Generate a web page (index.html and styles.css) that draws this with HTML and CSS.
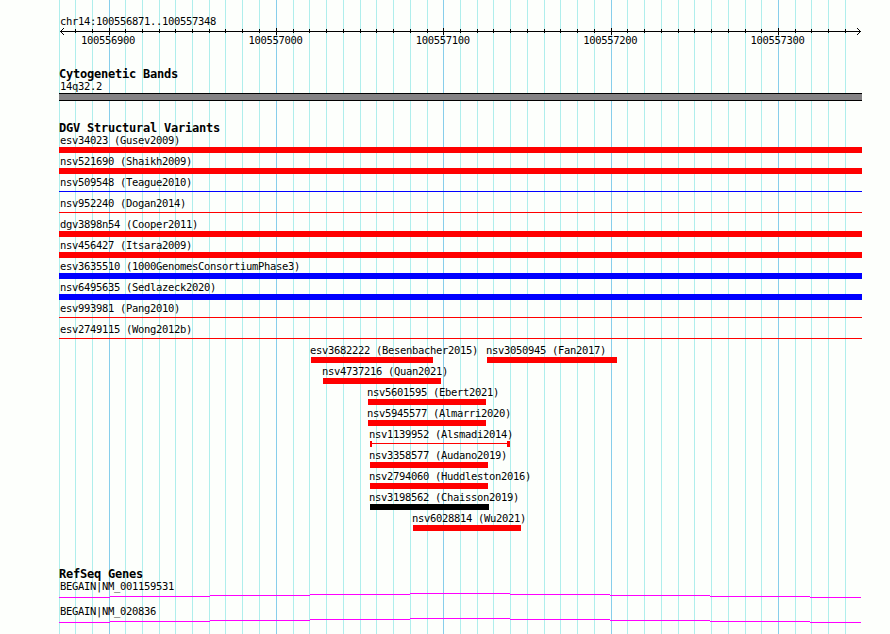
FILE: index.html
```
<!DOCTYPE html>
<html lang="en">
<head>
<meta charset="utf-8">
<title>chr14:100556871..100557348</title>
<link rel="stylesheet" href="styles.css">
</head>
<body>
<main class="browser">
<svg class="grid" width="890" height="634" shape-rendering="crispEdges" aria-hidden="true">
<path class="minor" d="M59.5 0V634M75.5 0V634M92.5 0V634M125.5 0V634M142.5 0V634M159.5 0V634M175.5 0V634M192.5 0V634M209.5 0V634M225.5 0V634M242.5 0V634M259.5 0V634M293.5 0V634M309.5 0V634M326.5 0V634M343.5 0V634M360.5 0V634M376.5 0V634M393.5 0V634M410.5 0V634M427.5 0V634M460.5 0V634M477.5 0V634M493.5 0V634M510.5 0V634M527.5 0V634M544.5 0V634M560.5 0V634M577.5 0V634M594.5 0V634M627.5 0V634M644.5 0V634M661.5 0V634M678.5 0V634M694.5 0V634M711.5 0V634M728.5 0V634M745.5 0V634M761.5 0V634M795.5 0V634M811.5 0V634M828.5 0V634M845.5 0V634"/>
<path class="major" d="M109.5 0V634M276.5 0V634M443.5 0V634M611.5 0V634M778.5 0V634"/>
</svg>
<header class="ruler">
<div class="label region">chr14:100556871..100557348</div>
<svg class="axis" width="890" height="7" shape-rendering="crispEdges">
<path d="M60 3.5H861M75.5 1v4M92.5 1v4M109.5 0v7M125.5 1v4M142.5 1v4M159.5 1v4M175.5 1v4M192.5 1v4M209.5 1v4M225.5 1v4M242.5 1v4M259.5 1v4M276.5 0v7M293.5 1v4M309.5 1v4M326.5 1v4M343.5 1v4M360.5 1v4M376.5 1v4M393.5 1v4M410.5 1v4M427.5 1v4M443.5 0v7M460.5 1v4M477.5 1v4M493.5 1v4M510.5 1v4M527.5 1v4M544.5 1v4M560.5 1v4M577.5 1v4M594.5 1v4M611.5 0v7M627.5 1v4M644.5 1v4M661.5 1v4M678.5 1v4M694.5 1v4M711.5 1v4M728.5 1v4M745.5 1v4M761.5 1v4M778.5 0v7M795.5 1v4M811.5 1v4M828.5 1v4M845.5 1v4"/>
<path d="M61 2.5h1M62 1.5h1M63 .5h1M61 4.5h1M62 5.5h1M63 6.5h1M859 2.5h1M858 1.5h1M857 .5h1M859 4.5h1M858 5.5h1M857 6.5h1"/>
</svg>
<div class="positions"><span class="label">100556900</span><span class="label">100557000</span><span class="label">100557100</span><span class="label">100557200</span><span class="label">100557300</span></div>
</header>
<section class="bands">
<h2>Cytogenetic Bands</h2>
<div class="label">14q32.2</div>
<div class="band"></div>
</section>
<section class="variants">
<h2>DGV Structural Variants</h2>
<div class="row"><div class="label">esv34023 (Gusev2009)</div><div class="bar"></div></div>
<div class="row"><div class="label">nsv521690 (Shaikh2009)</div><div class="bar"></div></div>
<div class="row"><div class="label">nsv509548 (Teague2010)</div><div class="bar thin blue"></div></div>
<div class="row"><div class="label">nsv952240 (Dogan2014)</div><div class="bar thin"></div></div>
<div class="row"><div class="label">dgv3898n54 (Cooper2011)</div><div class="bar"></div></div>
<div class="row"><div class="label">nsv456427 (Itsara2009)</div><div class="bar"></div></div>
<div class="row"><div class="label">esv3635510 (1000GenomesConsortiumPhase3)</div><div class="bar blue"></div></div>
<div class="row"><div class="label">nsv6495635 (Sedlazeck2020)</div><div class="bar blue"></div></div>
<div class="row"><div class="label">esv993981 (Pang2010)</div><div class="bar thin"></div></div>
<div class="row"><div class="label">esv2749115 (Wong2012b)</div><div class="bar thin"></div></div>
<div class="row pair">
<div class="item" style="--start:252px;--len:122px"><div class="label">esv3682222 (Besenbacher2015)</div><div class="bar"></div></div>
<div class="item" style="--start:428px;--len:130px"><div class="label">nsv3050945 (Fan2017)</div><div class="bar"></div></div>
</div>
<div class="row item" style="--start:264px;--len:118px"><div class="label">nsv4737216 (Quan2021)</div><div class="bar"></div></div>
<div class="row item" style="--start:309px;--len:118px"><div class="label">nsv5601595 (Ebert2021)</div><div class="bar"></div></div>
<div class="row item" style="--start:309px;--len:118px"><div class="label">nsv5945577 (Almarri2020)</div><div class="bar"></div></div>
<div class="row item" style="--start:311px;--len:140px"><div class="label">nsv1139952 (Alsmadi2014)</div><div class="bar capped"></div></div>
<div class="row item" style="--start:311px;--len:118px"><div class="label">nsv3358577 (Audano2019)</div><div class="bar"></div></div>
<div class="row item" style="--start:311px;--len:118px"><div class="label">nsv2794060 (Huddleston2016)</div><div class="bar"></div></div>
<div class="row item" style="--start:311px;--len:119px"><div class="label">nsv3198562 (Chaisson2019)</div><div class="bar black"></div></div>
<div class="row item" style="--start:354px;--len:108px"><div class="label">nsv6028814 (Wu2021)</div><div class="bar"></div></div>
</section>
<section class="genes">
<h2>RefSeq Genes</h2>
<div class="gene"><div class="label">BEGAIN|NM_001159531</div>
<svg width="803" height="5" shape-rendering="crispEdges"><path d="M0 4.5H51M51 3.5H151M151 2.5H251M251 1.5H351M351 .5H451M451 1.5H551M551 2.5H651M651 3.5H751M751 4.5H802"/></svg></div>
<div class="gene"><div class="label">BEGAIN|NM_020836</div>
<svg width="803" height="5" shape-rendering="crispEdges"><path d="M0 4.5H51M51 3.5H151M151 2.5H251M251 1.5H351M351 .5H451M451 1.5H551M551 2.5H651M651 3.5H751M751 4.5H802"/></svg></div>
</section>
</main>
</body>
</html>
```
FILE: styles.css
```
* { box-sizing: border-box; }
body { margin: 0; background: #fdfffc; color: #000; }
svg { display: block; }
.browser {
  position: relative;
  display: flex;
  flex-direction: column;
  width: 890px;
  height: 634px;
  overflow: hidden;
}
.browser > header, .browser > section { position: relative; }
.grid { position: absolute; inset: 0; }
.grid path { fill: none; stroke-width: 1; }
.minor { stroke: #afeeec; }
.major { stroke: #87ceeb; }
.label {
  height: 15px;
  padding-left: 1px;
  font: 10.5px/17px "DejaVu Sans Mono", monospace;
  letter-spacing: -0.321px;
  white-space: pre;
}
h2 {
  height: 12px;
  margin: 0;
  font: bold 12px/13px "DejaVu Sans Mono", monospace;
  letter-spacing: -0.224px;
  white-space: pre;
}
.ruler { height: 68px; padding-top: 13px; }
.region { margin-left: 59px; }
.axis path { fill: none; stroke: #000; }
.positions { display: flex; gap: 113px; padding: 0 0 0 80px; margin-top: -2px; }
.positions .label { width: 54.4px; line-height: 15px; }
section { width: 803px; margin-left: 59px; }
.bands { height: 54px; }
.bands .label { height: 13px; line-height: 13px; }
.band { height: 8px; border: solid #000; border-width: 1px 0; background: #848284; }
.variants { height: 446px; }
.variants h2 { height: 10px; }
.row { height: 21px; }
.bar { height: 6px; background: #f00; }
.blue { background: #00f; }
.black { background: #000; }
.thin { height: 1px; margin-top: 2px; }
.item { padding-left: var(--start); }
.item .label { padding: 0; margin-left: -1px; }
.item .bar { width: var(--len); }
.pair { display: grid; }
.pair .item { grid-area: 1 / 1; }
.item .capped {
  background: linear-gradient(#f00, #f00) 0 0 / 2px 6px no-repeat,
    linear-gradient(#f00, #f00) 100% 0 / 3px 6px no-repeat,
    linear-gradient(#f00, #f00) 0 2px / 100% 1px no-repeat;
}
.genes h2 { height: 10px; }
.gene { height: 25px; }
.gene .label { line-height: 17px; }
.gene path { fill: none; stroke: #f0f; }
```
